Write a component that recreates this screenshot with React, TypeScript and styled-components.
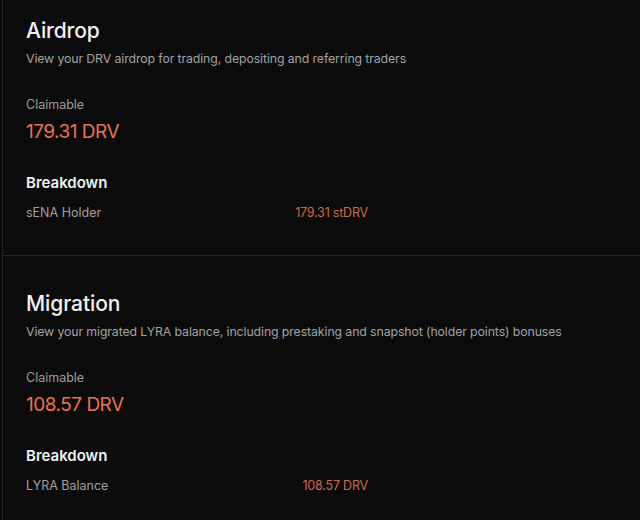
import React from 'react'
import styled, { createGlobalStyle } from 'styled-components'

const GlobalStyle = createGlobalStyle`
  html, body {
    margin: 0;
    padding: 0;
    background: #0b0b0b;
    font-family: Inter, "Noto Sans", "Liberation Sans", sans-serif;
    -webkit-font-smoothing: antialiased;
  }
`

const Panel = styled.div`
  margin-left: 2px;
  min-height: 520px;
  border-left: 1px solid #232323;
  background: #0b0b0b;
  overflow: hidden;
`

const Section = styled.section<{ $first?: boolean }>`
  display: flex;
  flex-direction: column;
  padding: ${({ $first }) => ($first ? '18px' : '35px')} 23px 33px;
  border-top: ${({ $first }) => ($first ? 'none' : '1px solid #2a2a2a')};
`

const Title = styled.h2`
  margin: 0;
  font-size: 21px;
  line-height: 26px;
  font-weight: 500;
  color: #f2f2f2;
  letter-spacing: -0.1px;
`

const Subtitle = styled.p`
  margin: 6px 0 0;
  font-size: 12.3px;
  line-height: 18px;
  color: #a3a3a3;
  letter-spacing: -0.1px;
`

const Stat = styled.div`
  display: flex;
  flex-direction: column;
  margin-top: 28px;
`

const Label = styled.span`
  font-size: 12.5px;
  line-height: 18px;
  color: #9d9d9d;
`

const Amount = styled.span`
  margin-top: 6px;
  font-size: 19px;
  line-height: 24px;
  color: #ea7150;
  letter-spacing: -0.5px;
`

const BreakdownTitle = styled.h3`
  margin: 29px 0 0;
  font-size: 15px;
  line-height: 20px;
  font-weight: 600;
  color: #eef3f3;
`

const Table = styled.div`
  display: grid;
  grid-template-columns: 1fr auto;
  width: 342px;
  margin-top: 11px;
  row-gap: 8px;
`

const RowLabel = styled.span`
  font-size: 12.5px;
  line-height: 18px;
  color: #a0a0a0;
`

const RowValue = styled.span`
  font-size: 12.5px;
  line-height: 18px;
  color: #cf6a4c;
  text-align: right;
  letter-spacing: -0.2px;
`

type Breakdown = { label: string; value: string }

type Reward = {
  title: string
  description: string
  claimable: string
  breakdown: Breakdown[]
}

const rewards: Reward[] = [
  {
    title: 'Airdrop',
    description: 'View your DRV airdrop for trading, depositing and referring traders',
    claimable: '179.31 DRV',
    breakdown: [{ label: 'sENA Holder', value: '179.31 stDRV' }],
  },
  {
    title: 'Migration',
    description:
      'View your migrated LYRA balance, including prestaking and snapshot (holder points) bonuses',
    claimable: '108.57 DRV',
    breakdown: [{ label: 'LYRA Balance', value: '108.57 DRV' }],
  },
]

const App = () => {
  return (
    <>
      <GlobalStyle />
      <Panel>
        {rewards.map((reward, i) => (
          <Section key={reward.title} $first={i === 0}>
            <Title>{reward.title}</Title>
            <Subtitle>{reward.description}</Subtitle>
            <Stat>
              <Label>Claimable</Label>
              <Amount>{reward.claimable}</Amount>
            </Stat>
            <BreakdownTitle>Breakdown</BreakdownTitle>
            <Table>
              {reward.breakdown.map((row) => (
                <React.Fragment key={row.label}>
                  <RowLabel>{row.label}</RowLabel>
                  <RowValue>{row.value}</RowValue>
                </React.Fragment>
              ))}
            </Table>
          </Section>
        ))}
      </Panel>
    </>
  )
}

export default App
